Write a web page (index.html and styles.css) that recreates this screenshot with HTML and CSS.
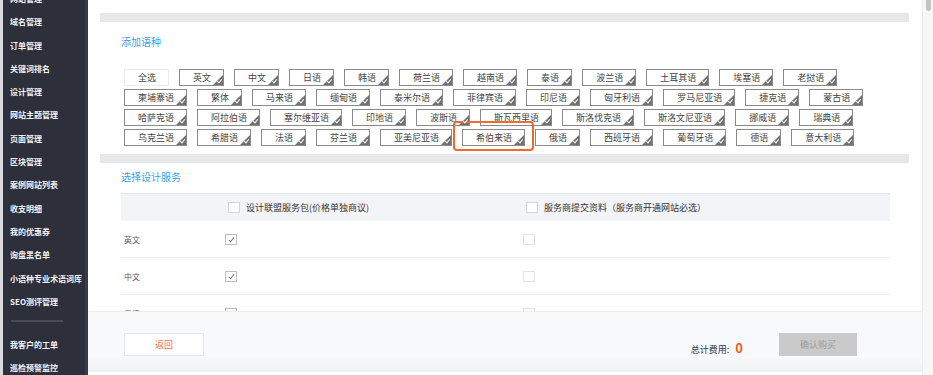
FILE: index.html
```html
<!DOCTYPE html>
<html lang="zh-CN">

<head>
    <meta charset="UTF-8">
    <title>添加语种</title>
    <link rel="stylesheet" href="styles.css">
</head>

<body>
    <aside class="sidebar">
        <ul class="menu">
            <li>网站管理</li>
            <li>域名管理</li>
            <li>订单管理</li>
            <li>关键词排名</li>
            <li>设计管理</li>
            <li>网站主题管理</li>
            <li>页面管理</li>
            <li>区块管理</li>
            <li>案例网站列表</li>
            <li>收支明细</li>
            <li>我的优惠券</li>
            <li>询盘黑名单</li>
            <li>小语种专业术语词库</li>
            <li>SEO测评管理</li>
            <li class="divider"></li>
            <li>我客户的工单</li>
            <li>巡检预警监控</li>
        </ul>
    </aside>

    <main class="main">
        <div class="band"></div>

        <section class="section">
            <h2 class="title">添加语种</h2>
            <div class="tags">
                <span class="tag all">全选</span>
                <span class="tag">英文</span>
                <span class="tag">中文</span>
                <span class="tag">日语</span>
                <span class="tag">韩语</span>
                <span class="tag">荷兰语</span>
                <span class="tag">越南语</span>
                <span class="tag">泰语</span>
                <span class="tag">波兰语</span>
                <span class="tag">土耳其语</span>
                <span class="tag">埃塞语</span>
                <span class="tag">老挝语</span>
                <span class="tag">柬埔寨语</span>
                <span class="tag">繁体</span>
                <span class="tag">马来语</span>
                <span class="tag">缅甸语</span>
                <span class="tag">泰米尔语</span>
                <span class="tag">菲律宾语</span>
                <span class="tag">印尼语</span>
                <span class="tag">匈牙利语</span>
                <span class="tag">罗马尼亚语</span>
                <span class="tag">捷克语</span>
                <span class="tag">蒙古语</span>
                <span class="tag">哈萨克语</span>
                <span class="tag">阿拉伯语</span>
                <span class="tag">塞尔维亚语</span>
                <span class="tag">印地语</span>
                <span class="tag">波斯语</span>
                <span class="tag">斯瓦西里语</span>
                <span class="tag">斯洛伐克语</span>
                <span class="tag">斯洛文尼亚语</span>
                <span class="tag">挪威语</span>
                <span class="tag">瑞典语</span>
                <span class="tag">乌克兰语</span>
                <span class="tag">希腊语</span>
                <span class="tag">法语</span>
                <span class="tag">芬兰语</span>
                <span class="tag">亚美尼亚语</span>
                <span class="tag">希伯来语<span class="mark"></span></span>
                <span class="tag">俄语</span>
                <span class="tag">西班牙语</span>
                <span class="tag">葡萄牙语</span>
                <span class="tag">德语</span>
                <span class="tag">意大利语</span>
            </div>
        </section>

        <div class="band band-2"></div>

        <section class="section">
            <h2 class="title title-2">选择设计服务</h2>
            <div class="table">
                <div class="row head">
                    <div class="cell"></div>
                    <div class="cell"><span class="cb"></span>设计联盟服务包(价格单独商议)</div>
                    <div class="cell"><span class="cb"></span>服务商提交资料（服务商开通网站必选）</div>
                </div>
                <div class="row">
                    <div class="cell label">英文</div>
                    <div class="cell"><span class="cb on"></span></div>
                    <div class="cell"><span class="cb off"></span></div>
                </div>
                <div class="row">
                    <div class="cell label">中文</div>
                    <div class="cell"><span class="cb on"></span></div>
                    <div class="cell"><span class="cb off"></span></div>
                </div>
                <div class="row">
                    <div class="cell label">日语</div>
                    <div class="cell"><span class="cb on"></span></div>
                    <div class="cell"><span class="cb off"></span></div>
                </div>
            </div>
        </section>

        <footer class="bar">
            <button class="btn back">返回</button>
            <div class="total">总计费用: <b>0</b></div>
            <button class="btn buy">确认购买</button>
        </footer>
    </main>

    <div class="scrollbar"><span class="thumb"></span></div>
</body>

</html>
```

FILE: styles.css
```css
/* General Styles */
body {
    margin: 0;
    height: 375px;
    display: flex;
    overflow: hidden;
    font-family: "Noto Sans CJK SC", "Liberation Sans", sans-serif;
    background-color: #fff;
    color: #333;
}

/* Sidebar */
.sidebar {
    width: 82px;
    flex: none;
    background-color: #2d303b;
    border-left: 3px solid #d9dadf;
    border-right: 3px solid #383b46;
    overflow: hidden;
}

.menu {
    list-style: none;
    margin: -13px 0 0;
    padding: 0 0 0 7px;
}

.menu li {
    height: 23.3px;
    line-height: 23.3px;
    font-size: 8px;
    font-weight: bold;
    color: #f2f2f4;
    white-space: nowrap;
}

.menu .divider {
    height: 2px;
    margin: 7px 22px 11px 1px;
    background-color: #474a55;
}

/* Main */
.main {
    flex: 1;
    position: relative;
    overflow: hidden;
    padding: 0 13px 0 12px;
}

.band {
    height: 9px;
    margin-top: 13px;
    background-color: #e7e8ec;
}

.band-2 {
    margin-top: 7.7px;
}

.section {
    padding: 0 19px 0 21px;
}

.title {
    margin: 13px 0 0;
    font-size: 10px;
    line-height: 14px;
    font-weight: normal;
    color: #3c9fe6;
}

.title-2 {
    margin-top: 6.7px;
}

/* Language tags */
.tags {
    display: flex;
    flex-wrap: wrap;
    column-gap: 10px;
    row-gap: 3.2px;
    margin-top: 19.7px;
    padding-left: 3px;
}

.tag {
    position: relative;
    height: 15px;
    line-height: 15px;
    padding: 0 12px 0 13px;
    border: 1px solid #8a8a8a;
    font-size: 9px;
    color: #444;
    white-space: nowrap;
}

.tag::after {
    content: "";
    position: absolute;
    right: 0;
    bottom: 0;
    border-left: 10px solid transparent;
    border-bottom: 10px solid #707070;
}

.tag::before {
    content: "";
    position: absolute;
    right: 2px;
    bottom: 2px;
    width: 2px;
    height: 4px;
    border: solid #fff;
    border-width: 0 1px 1px 0;
    transform: rotate(40deg);
    z-index: 1;
}

.tag.all {
    border-color: #ececec;
}

.tag.all::after,
.tag.all::before {
    display: none;
}

.mark {
    position: absolute;
    top: -9px;
    left: -10px;
    right: -10px;
    bottom: -6px;
    border: 2px solid #ec6a33;
    border-radius: 4px;
}

/* Design service table */
.table {
    margin-top: 9.6px;
    border-top: 1px solid #e4e5e9;
}

.row {
    display: grid;
    grid-template-columns: 104px 298px 1fr;
    align-items: center;
    height: 36px;
    border-bottom: 1px solid #efefef;
    font-size: 8px;
    color: #555;
}

.row.head {
    height: 27px;
    border-bottom: none;
    background-color: #f3f4f7;
    font-size: 9px;
    color: #333;
}

.cell {
    display: flex;
    align-items: center;
}

.head .cell {
    padding-left: 3px;
}

.label {
    padding-left: 3px;
}

.cb {
    position: relative;
    width: 10px;
    height: 9px;
    margin-right: 6px;
    border: 1px solid #d4d4d4;
    background-color: #fff;
}

.cb.on {
    border-color: #bdbdbd;
}

.cb.off {
    border-color: #e2e2e2;
}

.cb.on::after {
    content: "";
    position: absolute;
    left: 4px;
    top: 1px;
    width: 2px;
    height: 5px;
    border: solid #777;
    border-width: 0 1.5px 1.5px 0;
    transform: rotate(38deg);
}

/* Bottom bar */
.bar {
    position: absolute;
    left: 0;
    right: 0;
    bottom: 3px;
    height: 39px;
    display: flex;
    align-items: flex-start;
    padding: 21px 65px 0 36px;
    border-top: 1px solid #eceef2;
    background: linear-gradient(to bottom, #f8f9fb 75%, #f0f1f4);
}

.btn {
    height: 23px;
    font-family: inherit;
    font-size: 9px;
    cursor: pointer;
}

.back {
    width: 80px;
    background-color: #fff;
    border: 1px solid #e6e7ea;
    color: #f06a4c;
}

.total {
    margin-left: auto;
    margin-top: 5px;
    font-size: 9px;
    color: #333;
}

.total b {
    margin-left: 4px;
    font-size: 13px;
    color: #ef5a1e;
}

.buy {
    width: 78px;
    margin-left: 36px;
    border: none;
    background-color: #cacaca;
    color: #9c9c9c;
}

/* Scrollbar */
.scrollbar {
    width: 10px;
    flex: none;
    background-color: #f7f7f7;
    border-left: 1px solid #ececec;
}

.thumb {
    display: block;
    width: 5px;
    height: 11px;
    margin-left: 3px;
    border-radius: 0 0 3px 3px;
    background-color: #c3c3c3;
}
```
